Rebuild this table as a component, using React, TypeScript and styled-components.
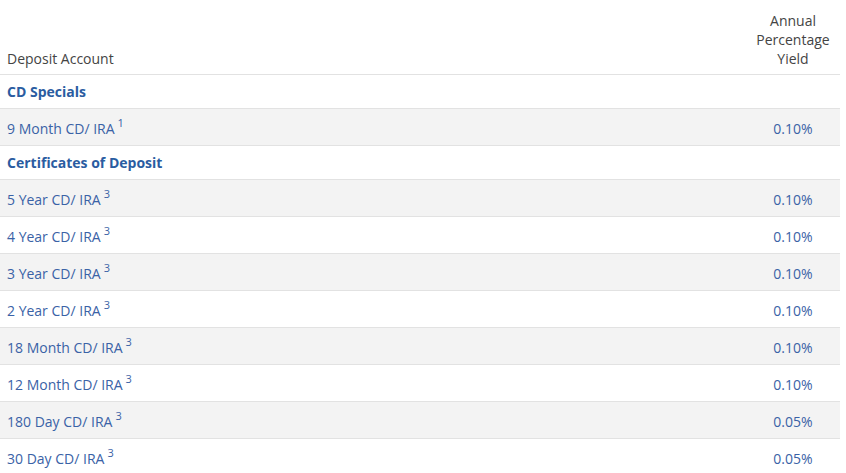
import React from 'react'
import styled, { createGlobalStyle } from 'styled-components'

const GlobalStyle = createGlobalStyle`
  body {
    margin: 0;
    background: #ffffff;
    font-family: "Open Sans", "Liberation Sans", sans-serif;
  }
`

type Rate = {
  name: string
  note: number
  apy: string
}

type Section = {
  title: string
  rates: Rate[]
}

const sections: Section[] = [
  {
    title: 'CD Specials',
    rates: [{ name: '9 Month CD/ IRA', note: 1, apy: '0.10%' }]
  },
  {
    title: 'Certificates of Deposit',
    rates: [
      { name: '5 Year CD/ IRA', note: 3, apy: '0.10%' },
      { name: '4 Year CD/ IRA', note: 3, apy: '0.10%' },
      { name: '3 Year CD/ IRA', note: 3, apy: '0.10%' },
      { name: '2 Year CD/ IRA', note: 3, apy: '0.10%' },
      { name: '18 Month CD/ IRA', note: 3, apy: '0.10%' },
      { name: '12 Month CD/ IRA', note: 3, apy: '0.10%' },
      { name: '180 Day CD/ IRA', note: 3, apy: '0.05%' },
      { name: '30 Day CD/ IRA', note: 3, apy: '0.05%' }
    ]
  }
]

const RateTable = styled.table`
  width: 840px;
  border-collapse: collapse;
  font-size: 14px;
  line-height: 19px;
`

const HeadCell = styled.th<{ align?: string }>`
  padding: 7px 7px 6px;
  height: 61px;
  vertical-align: bottom;
  font-weight: 400;
  color: #444444;
  text-align: ${(props) => props.align || 'left'};
  border-bottom: 1px solid #e2e2e2;
`

const ApyHead = styled(HeadCell)`
  width: 80px;
`

const Row = styled.tr<{ striped?: boolean }>`
  background: ${(props) => (props.striped ? '#f3f3f3' : '#ffffff')};
  border-bottom: 1px solid #e2e2e2;
`

const SectionCell = styled.td`
  padding: 7px;
  font-weight: 700;
  color: #2a5ca1;
`

const Cell = styled.td<{ align?: string }>`
  padding: 7px;
  height: 22px;
  vertical-align: bottom;
  color: #3a62a6;
  text-align: ${(props) => props.align || 'left'};
`

const Note = styled.sup`
  font-size: 11px;
  line-height: 0;
  margin-left: 3px;
  position: relative;
  top: -1px;
`

export default function App () {
  let stripe = 0
  return (
    <>
      <GlobalStyle />
      <RateTable>
        <thead>
          <tr>
            <HeadCell>Deposit Account</HeadCell>
            <ApyHead align='center'>Annual Percentage Yield</ApyHead>
          </tr>
        </thead>
        <tbody>
          {sections.map((section) => {
            stripe = 0
            return (
              <React.Fragment key={section.title}>
                <Row>
                  <SectionCell colSpan={2}>{section.title}</SectionCell>
                </Row>
                {section.rates.map((rate) => {
                  stripe += 1
                  return (
                    <Row key={rate.name} striped={stripe % 2 === 1}>
                      <Cell>
                        {rate.name}
                        <Note>{rate.note}</Note>
                      </Cell>
                      <Cell align='center'>{rate.apy}</Cell>
                    </Row>
                  )
                })}
              </React.Fragment>
            )
          })}
        </tbody>
      </RateTable>
    </>
  )
}
